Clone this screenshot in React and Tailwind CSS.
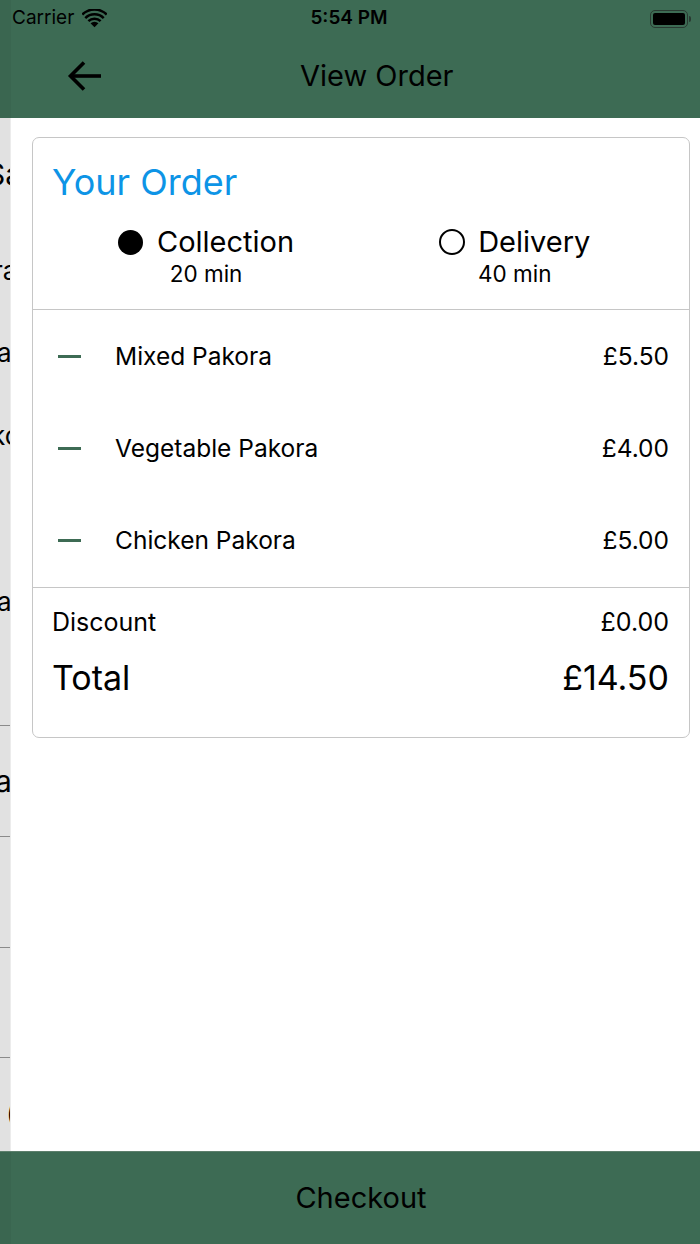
import React from "react";

const FONT = { fontFamily: "Inter, 'Noto Sans', sans-serif" };

function Minus() {
  return <div className="w-[23px] h-[3px] bg-[#3d6b54]" />;
}

function Item({ name, price }) {
  return (
    <div className="h-[92px] flex items-center pl-[25px] pr-[20px]">
      <Minus />
      <div className="ml-[34px] text-[24.5px] text-black flex-1">{name}</div>
      <div className="text-[24.5px] text-black">{price}</div>
    </div>
  );
}

function LeftStrip() {
  return (
    <div className="w-[11px] shrink-0 bg-[#e1e1e1] overflow-hidden flex flex-col text-black border-r border-[#ececec]">
      <div className="h-[38px]" />
      <div className="h-[36px] flex items-center whitespace-nowrap text-[30px] -ml-[14px]">Sa</div>
      <div className="h-[60px]" />
      <div className="h-[36px] flex items-center whitespace-nowrap text-[26px] -ml-[7px]">ra</div>
      <div className="h-[46px]" />
      <div className="h-[36px] flex items-center whitespace-nowrap text-[26px] -ml-[3px]">a</div>
      <div className="h-[47px]" />
      <div className="h-[36px] flex items-center whitespace-nowrap text-[26px] -ml-[9px]">ko</div>
      <div className="h-[130px]" />
      <div className="h-[36px] flex items-center whitespace-nowrap text-[26px] -ml-[3px]">a</div>
      <div className="h-[106px]" />
      <div className="h-px bg-[#8a8a8a]" />
      <div className="h-[37px]" />
      <div className="h-[36px] flex items-center whitespace-nowrap text-[30px] -ml-[5px]">a</div>
      <div className="h-[37px]" />
      <div className="h-px bg-[#8a8a8a]" />
      <div className="h-[110px]" />
      <div className="h-px bg-[#8a8a8a]" />
      <div className="h-[109px]" />
      <div className="h-px bg-[#8a8a8a]" />
      <div className="h-[37px]" />
      <div className="h-[36px] flex items-center whitespace-nowrap text-[28px] ml-[6px]">(</div>
    </div>
  );
}

export default function App() {
  return (
    <div style={FONT} className="w-[700px] h-[1244px] flex flex-col bg-white overflow-hidden">
      {/* Top green area */}
      <div className="bg-[#3d6b54] h-[118px] shrink-0 flex">
        <div className="w-[11px] shrink-0 bg-[#3a6650]" />
        <div className="flex-1 flex flex-col">
          <div className="h-[36px] flex items-center relative">
            <div className="flex items-center ml-[1px] mt-[1px]">
              <span className="text-[19px] text-black">Carrier</span>
              <svg width="25" height="19" viewBox="0 0 24 18" className="ml-[8px]">
                <path d="M12 17.5 L8.2 13.6 A5.4 5.4 0 0 1 15.8 13.6 Z" fill="#000" />
                <path d="M5.3 10.7 A9.6 9.6 0 0 1 18.7 10.7 L17 12.4 A7.2 7.2 0 0 0 7 12.4 Z" fill="#000" />
                <path d="M2.3 7.7 A13.8 13.8 0 0 1 21.7 7.7 L20 9.4 A11.4 11.4 0 0 0 4 9.4 Z" fill="#000" />
                <path d="M-0.6 4.8 A18 18 0 0 1 24.6 4.8 L22.9 6.5 A15.6 15.6 0 0 0 1.1 6.5 Z" fill="#000" transform="translate(0,-0.5)" />
              </svg>
            </div>
            <div className="absolute left-[338px] -translate-x-1/2 text-[19px] font-semibold text-black">5:54 PM</div>
            <div className="ml-auto mr-[9px] flex items-center mt-[1px]">
              <div className="w-[38px] h-[18px] rounded-[5px] border-[1.5px] border-[#2a3a32] p-[2px]">
                <div className="w-full h-full bg-black rounded-[2px]" />
              </div>
              <div className="w-[2px] h-[6px] bg-[#2a3a32] rounded-r-sm ml-[1px]" />
            </div>
          </div>
          <div className="flex-1 flex items-center pb-[2px]">
            <div className="ml-[55px] w-[38px] h-[38px] flex items-center justify-center">
              <svg width="36" height="32" viewBox="0 0 36 32" fill="none" stroke="#000" strokeWidth="3.6" strokeLinecap="butt">
                <path d="M34 16 H4" />
                <path d="M17 2.5 L3.5 16 L17 29.5" />
              </svg>
            </div>
            <div className="ml-[196px] text-[29px] text-black">View Order</div>
          </div>
        </div>
      </div>

      {/* Body */}
      <div className="flex-1 flex min-h-0">
        <LeftStrip />
        <div className="flex-1 bg-white pt-[19px] pl-[21px] pr-[10px]">
          <div className="border border-[#c6c6c6] rounded-[7px] bg-white">
            <div className="pt-[22px] pb-[21px]">
              <div className="pl-[19px] text-[36px] leading-[44px] text-[#0d94e6]">Your Order</div>
              <div className="flex mt-[20px] pl-[85px]">
                <div className="flex flex-col items-center">
                  <div className="flex items-center">
                    <div className="w-[25px] h-[25px] rounded-full bg-black" />
                    <span className="ml-[14px] text-[29px] leading-[36px] text-black">Collection</span>
                  </div>
                  <div className="text-[22.5px] leading-[28px] text-black">20 min</div>
                </div>
                <div className="flex flex-col items-center ml-[145px]">
                  <div className="flex items-center">
                    <div className="w-[26px] h-[26px] rounded-full border-[2.5px] border-black" />
                    <span className="ml-[13px] text-[29px] leading-[36px] text-black">Delivery</span>
                  </div>
                  <div className="text-[22.5px] leading-[28px] text-black">40 min</div>
                </div>
              </div>
            </div>
            <div className="h-px bg-[#c6c6c6]" />
            <Item name="Mixed Pakora" price="£5.50" />
            <Item name="Vegetable Pakora" price="£4.00" />
            <Item name="Chicken Pakora" price="£5.00" />
            <div className="h-px bg-[#c6c6c6] mt-[1px]" />
            <div className="px-[19px] pr-[20px] pt-[19px] pb-[38px]">
              <div className="flex justify-between text-[25px] leading-[30px] text-black">
                <span>Discount</span>
                <span>£0.00</span>
              </div>
              <div className="flex justify-between text-[34px] leading-[42px] text-black mt-[20px]">
                <span>Total</span>
                <span>£14.50</span>
              </div>
            </div>
          </div>
        </div>
      </div>

      {/* Checkout bar */}
      <div className="h-[93px] shrink-0 bg-[#3d6b54] flex border-t border-[#5d7f6c]">
        <div className="w-[11px] shrink-0 bg-[#3a6650]" />
        <div className="flex-1 flex items-center justify-center pl-[11px]">
          <span className="text-[29px] text-black">Checkout</span>
        </div>
      </div>
    </div>
  );
}
